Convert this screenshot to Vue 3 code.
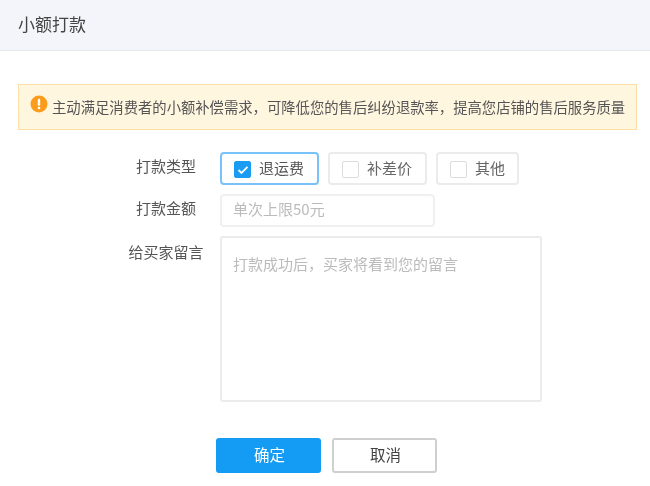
<script setup>
const types = [
  { label: '退运费', checked: true, cls: 'w99' },
  { label: '补差价', checked: false, cls: 'w99' },
  { label: '其他', checked: false, cls: 'w83' }
]
</script>

<template>
  <div class="page">
    <header class="head">小额打款</header>
    <div class="notice">
      <svg class="warn" width="18" height="18" viewBox="0 0 18 18">
        <circle cx="9" cy="9" r="8.5" fill="#fa9d1c" />
        <rect x="7.8" y="3.8" width="2.4" height="7" rx="1.1" fill="#fff" />
        <circle cx="9" cy="13" r="1.3" fill="#fff" />
      </svg>
      <span class="notice-text">主动满足消费者的小额补偿需求，可降低您的售后纠纷退款率，提高您店铺的售后服务质量</span>
    </div>
    <div class="form">
      <div class="row">
        <label class="lab">打款类型</label>
        <div class="opts">
          <div v-for="t in types" :key="t.label" class="opt" :class="[t.cls, { on: t.checked }]">
            <span class="box">
              <svg v-if="t.checked" width="12" height="10" viewBox="0 0 12 10">
                <path d="M1.5 5 L4.5 8 L10.5 1.8" fill="none" stroke="#fff" stroke-width="1.8" />
              </svg>
            </span>
            <span class="opt-text">{{ t.label }}</span>
          </div>
        </div>
      </div>
      <div class="row">
        <label class="lab">打款金额</label>
        <div class="input">单次上限50元</div>
      </div>
      <div class="row">
        <label class="lab lab-msg">给买家留言</label>
        <div class="area">打款成功后，买家将看到您的留言</div>
      </div>
    </div>
    <div class="btns">
      <button class="btn primary">确定</button>
      <button class="btn">取消</button>
    </div>
  </div>
</template>

<style>
body { margin: 0; background: #fff; }
</style>

<style scoped>
.page {
  width: 650px;
  height: 486px;
  overflow: hidden;
  font-family: "Noto Sans CJK SC", "Liberation Sans", sans-serif;
  font-size: 15px;
  color: #333;
  background: #fff;
  filter: blur(0.45px);
}
.head {
  box-sizing: border-box;
  height: 51px;
  padding: 0 0 3px 18px;
  display: flex;
  align-items: center;
  background: #f3f5fa;
  border-bottom: 1px solid #e8e9ec;
  font-size: 17px;
  color: #444;
}
.notice {
  box-sizing: border-box;
  margin: 33px 0 0 18px;
  width: 619px;
  height: 46px;
  padding: 0 0 0 11px;
  display: flex;
  align-items: center;
  gap: 4px;
  background: #fff6e0;
  border: 1px solid #fddfa6;
  font-size: 14.33px;
  white-space: nowrap;
  color: #555;
}
.warn { margin-top: -6px; flex: none; }
.notice-text { margin-top: -1px; }
.form {
  margin-top: 22px;
  display: flex;
  flex-direction: column;
  gap: 9px;
}
.row { display: flex; align-items: flex-start; }
.lab {
  width: 220px;
  padding-left: 112px;
  padding-right: 0;
  box-sizing: border-box;
  display: flex;
  justify-content: center;
  line-height: 28px;
  color: #555;
  white-space: nowrap;
}
.lab-msg { line-height: 32px; }
.opts { display: flex; gap: 9px; }
.opt {
  box-sizing: border-box;
  height: 33px;
  display: flex;
  align-items: center;
  padding-left: 12px;
  gap: 8px;
  border: 2px solid #ebebeb;
  border-radius: 4px;
  color: #666;
}
.opt-text { margin-top: -2px; }
.w99 { width: 99px; }
.w83 { width: 83px; }
.opt.on { border-color: #78c2f8; color: #555; }
.box {
  box-sizing: border-box;
  width: 17px;
  height: 17px;
  margin-top: 2px;
  border: 1px solid #dcdcdc;
  border-radius: 2px;
  display: flex;
  align-items: center;
  justify-content: center;
}
.on .box { background: #1a9cf3; border-color: #1a9cf3; }
.input {
  box-sizing: border-box;
  width: 215px;
  height: 33px;
  padding: 0 0 4px 11px;
  display: flex;
  align-items: center;
  border: 2px solid #f0f0f0;
  border-radius: 4px;
  color: #bbb;
}
.area {
  box-sizing: border-box;
  width: 322px;
  height: 166px;
  padding: 16px 0 0 11px;
  border: 2px solid #ebebeb;
  border-radius: 3px;
  color: #bbb;
  line-height: 20px;
}
.btns {
  margin: 36px 0 0 216px;
  display: flex;
  gap: 11px;
}
.btn {
  box-sizing: border-box;
  width: 105px;
  height: 35px;
  border: 2px solid #cfcfcf;
  border-radius: 3px;
  background: #fff;
  color: #444;
  font: inherit;
  font-size: 15.5px;
  padding: 0 0 4px 2px;
}
.primary {
  background: #149bf4;
  border-color: #149bf4;
  color: #fff;
}
</style>
